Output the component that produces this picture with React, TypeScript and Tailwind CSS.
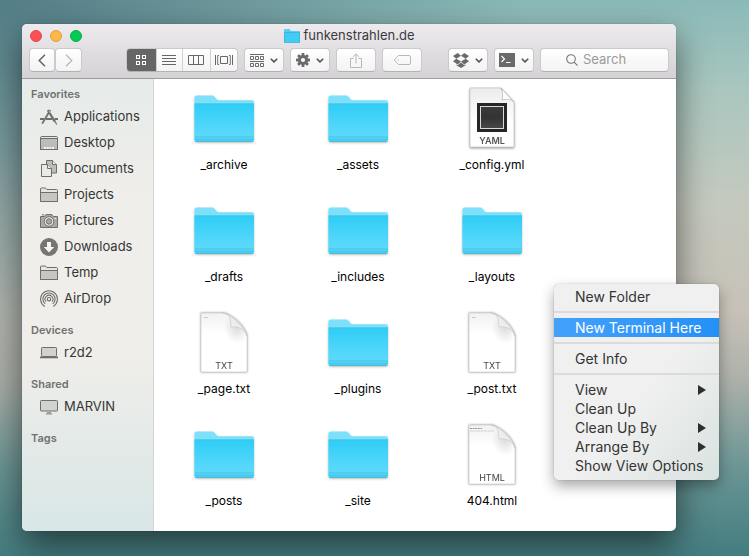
import React, { useState } from 'react';

type IconProps = { className?: string };

/* ---------- Toolbar icons ---------- */

const Chevron = () => (
  <svg viewBox="0 0 8 5" className="h-[5px] w-2 shrink-0" fill="none" stroke="#555" strokeWidth="1.6">
    <path d="M0.8 0.7 L4 3.9 L7.2 0.7" />
  </svg>
);

const BackIcon = () => (
  <svg viewBox="0 0 8 13" className="h-[13px] w-2" fill="none" stroke="#666" strokeWidth="1.5">
    <path d="M7 0.8 L1.2 6.5 L7 12.2" />
  </svg>
);

const ForwardIcon = () => (
  <svg viewBox="0 0 8 13" className="h-[13px] w-2" fill="none" stroke="#b9b9b9" strokeWidth="1.3">
    <path d="M1 0.8 L6.8 6.5 L1 12.2" />
  </svg>
);

const GridIcon = () => (
  <svg viewBox="0 0 10 10" className="size-[10px]" fill="none" stroke="#fff">
    <path d="M0.5 0.5h3v3h-3z M6.5 0.5h3v3h-3z M0.5 6.5h3v3h-3z M6.5 6.5h3v3h-3z" strokeWidth="1.1" />
  </svg>
);

const ListIcon = () => (
  <svg viewBox="0 0 14 10" className="h-[10px] w-[14px]" stroke="#666">
    <path d="M0 0.5h14 M0 3.5h14 M0 6.5h14 M0 9.5h14" />
  </svg>
);

const ColumnsIcon = () => (
  <svg viewBox="0 0 16 10" className="h-[10px] w-4" fill="none" stroke="#666">
    <path d="M0.5 0.5h15v9h-15z M5.5 0.5v9 M10.5 0.5v9" />
  </svg>
);

const FlowIcon = () => (
  <svg viewBox="0 0 18 10" className="h-[10px] w-[18px]" fill="none" stroke="#666">
    <path d="M5.5 1.5h7v7h-7z M0.5 0v10 M17.5 0v10" />
    <path d="M4 0.5h-1.3v9h1.3 M14 0.5h1.3v9h-1.3" strokeWidth="0.9" />
  </svg>
);

const ArrangeIcon = () => (
  <svg viewBox="0 0 14 13" className="h-[13px] w-[14px]" fill="none" stroke="#6a6a6a">
    <path d="M0 0.5h14 M0 7.5h14" />
    <path d="M0.5 2.5h3v3h-3z M5.5 2.5h3v3h-3z M10.5 2.5h3v3h-3z M0.5 9.5h3v3h-3z M5.5 9.5h3v3h-3z M10.5 9.5h3v3h-3z" />
  </svg>
);

const GearIcon = () => (
  <svg viewBox="-7 -7 14 14" className="size-[14px]" fill="#6a6a6a">
    {[0, 45, 90, 135].map((angle) => (
      <rect key={angle} x="-1.4" y="-7" width="2.8" height="14" rx="0.5" transform={`rotate(${angle})`} />
    ))}
    <circle r="5" />
    <circle r="2.1" fill="#f8f8f8" />
  </svg>
);

const ShareIcon = () => (
  <svg viewBox="0 0 12 15" className="h-[15px] w-3" fill="none" stroke="#b8b8b8">
    <path d="M3.5 5.5h-3v9h11v-9h-3 M6 10.5V1 M3 3.8L6 0.8L9 3.8" />
  </svg>
);

const TagIcon = () => (
  <svg viewBox="0 0 17 10" className="h-[10px] w-[17px]" fill="none" stroke="#b8b8b8">
    <path d="M4.5 0.5h10.5q1.5 0 1.5 1.5v6q0 1.5 -1.5 1.5h-10.5L1 6.2q-0.8 -1.2 0 -2.4z" />
    <circle cx="4.2" cy="5" r="0.7" fill="#b8b8b8" stroke="none" />
  </svg>
);

const DropboxIcon = () => (
  <svg viewBox="0 0 16 15" className="h-[15px] w-4" fill="#6a6a6a">
    <path d="M4.7 0L8 2.8L3.3 5.7L0 3z M11.3 0L16 3L12.7 5.7L8 2.8z M3.3 5.7L8 8.6L4.7 11.4L0 8.3z M12.7 5.7L16 8.3L11.3 11.4L8 8.6z M4.7 12.2L8 9.5L11.3 12.2L12.7 11.4V12.3L8 15L3.3 12.3V11.4z" />
  </svg>
);

const TerminalIcon = () => (
  <svg viewBox="0 0 16 14" className="h-[14px] w-4" fill="none">
    <rect width="16" height="14" fill="#6a6a6a" />
    <path d="M2.5 3L5.5 6L2.5 9 M7 9.5h4.5" stroke="#fff" strokeWidth="1.2" />
  </svg>
);

const SearchIcon = () => (
  <svg viewBox="0 0 12 12" className="size-3 shrink-0" fill="none" stroke="#777" strokeWidth="1.1">
    <circle cx="5" cy="5" r="4.3" />
    <path d="M8.1 8.1L11.6 11.6" />
  </svg>
);

/* ---------- Sidebar icons ---------- */

const ApplicationsIcon = ({ className }: IconProps) => (
  <svg viewBox="0 0 18 18" className={className} fill="none" stroke="#6e6e6b">
    <path d="M10.3 2L2.2 15.6" strokeWidth="1.8" />
    <path d="M7.8 2L14.8 13.6" strokeWidth="2.2" />
    <path d="M14.6 13L16.8 16.5" strokeWidth="1.2" />
    <path d="M0 11h4 M6 11h6 M14.5 11h3.5" strokeWidth="1.8" />
    <path d="M9 2.5L10.4 5" stroke="#e9ebe8" strokeWidth="0.6" />
  </svg>
);

const DesktopIcon = ({ className }: IconProps) => (
  <svg viewBox="0 0 18 18" className={className} fill="#bcbcb9" stroke="#6e6e6b">
    <path d="M0.5 15.5V4q0 -1.5 1.5 -1.5h14q1.5 0 1.5 1.5v11.5z" />
    <path d="M1 3.5h16" stroke="#e6e6e3" />
    <path d="M1 4.5h16" />
    <path d="M4 14h10" stroke="#f4f4f2" strokeWidth="2" strokeDasharray="2 0.7" />
    <path d="M0 15.5h18" />
  </svg>
);

const DocumentsIcon = ({ className }: IconProps) => (
  <svg viewBox="0 0 18 18" className={className} stroke="#6e6e6b">
    <path d="M6.5 0.5h6l4 4v8.5h-10z" fill="#bcbcb9" />
    <path d="M12.5 0.5v4h4" fill="#eee" />
    <path d="M1.5 4.5h6l4 4v8h-10z" fill="#e9eae6" />
    <path d="M7.5 4.5v4h4" fill="#e9eae6" />
  </svg>
);

const FolderOutlineIcon = ({ className }: IconProps) => (
  <svg viewBox="0 0 18 18" className={className} fill="#c6c6c3" stroke="#6e6e6b">
    <path d="M0.5 15.5V3q0 -1 1 -1h4l1.3 1.5h9.7q1 0 1 1v11z" fill="#e6e6e2" />
    <path d="M0.5 6.5h17v9h-17z" />
  </svg>
);

const PicturesIcon = ({ className }: IconProps) => (
  <svg viewBox="0 0 18 18" className={className} fill="#aaaaa7" stroke="#6e6e6b">
    <path d="M0.5 15.5v-11h4.2l1.3 -1.9h6l1.3 1.9h4.2v11z" />
    <path d="M2 2.9h2.5" />
    <circle cx="9" cy="9.5" r="4.8" fill="#e8e8e4" />
    <circle cx="9" cy="9.5" r="2.7" fill="#aaaaa7" />
    <path d="M14.5 6.5h1.6" stroke="#eee" />
  </svg>
);

const DownloadsIcon = ({ className }: IconProps) => (
  <svg viewBox="0 0 18 18" className={className}>
    <circle cx="9" cy="9" r="9" fill="#757571" />
    <path d="M7 4h4v5h3.2L9 14.5L3.8 9H7z" fill="#f5f4f0" />
  </svg>
);

const AirDropIcon = ({ className }: IconProps) => (
  <svg viewBox="0 0 18 18" className={className} fill="none" stroke="#6e6e6b" strokeWidth="1.1">
    <path d="M4.8 16.4A8.4 8.4 0 1 1 13.2 16.4" />
    <path d="M5.3 13.9A6.1 6.1 0 1 1 12.7 13.9" />
    <path d="M6 11.7A3.9 3.9 0 1 1 12 11.7" />
    <circle cx="9" cy="9.2" r="1.7" />
  </svg>
);

const LaptopIcon = ({ className }: IconProps) => (
  <svg viewBox="0 0 18 18" className={className} fill="#d2d2cf" stroke="#6e6e6b">
    <rect x="1.5" y="3.5" width="15" height="9" rx="0.8" />
    <path d="M0 13.4h18" strokeWidth="1.8" />
  </svg>
);

const DisplayIcon = ({ className }: IconProps) => (
  <svg viewBox="0 0 18 18" className={className} fill="#d2d2cf" stroke="#6e6e6b">
    <rect x="0.5" y="2.5" width="17" height="10.5" rx="0.8" />
    <path d="M7 14.5h4" stroke="#999" />
    <path d="M6 15.9h6" stroke="#777" />
  </svg>
);

/* ---------- File icons ---------- */

const FolderIcon = () => (
  <svg viewBox="0 0 64 64" className="size-16 drop-shadow-[0_1px_1px_rgba(0,0,0,0.25)]">
    <defs>
      <linearGradient id="folder-front" x1="0" y1="0" x2="0" y2="1">
        <stop offset="0" stopColor="#2fcdf6" />
        <stop offset="0.8" stopColor="#5ad9fa" />
        <stop offset="1" stopColor="#4fcdee" />
      </linearGradient>
    </defs>
    <path d="M2.5 53V10.500q0 -2 2 -2h15.500q1.500 0 2.500 1.200l2.300 2.700q0.800 0.800 2 0.800H60q2 0 2 2v37z" fill="#7ee1fc" />
    <path d="M2.500 16.500h59.500v36.500q0 2 -2 2h-55.500q-2 0 -2 -2z" fill="url(#folder-front)" />
    <path d="M3 17h58.500" stroke="#41c2e6" strokeWidth="0.8" />
    <path d="M3 50h58.500 M3 52.500h58.500" stroke="#42c3e6" strokeWidth="0.8" />
    <path d="M4 54.600h56.500" stroke="#3db1d3" strokeWidth="0.8" />
  </svg>
);

const PageIcon = ({ label }: { label: string }) => (
  <svg viewBox="0 0 64 64" className="size-16 drop-shadow-[0_0_1px_rgba(0,0,0,0.4)]">
    <defs>
      <linearGradient id="page-fold" x1="0.1" y1="0.9" x2="0.8" y2="0.2">
        <stop offset="0" stopColor="#ffffff" />
        <stop offset="1" stopColor="#e2e2e2" />
      </linearGradient>
      <linearGradient id="page-shade" x1="0" y1="0" x2="0" y2="1">
        <stop offset="0" stopColor="#f1f1f1" />
        <stop offset="0.35" stopColor="#ffffff" />
      </linearGradient>
      <radialGradient id="page-curl" cx="0.78" cy="0.24" r="0.28">
        <stop offset="0" stopColor="#dcdcdc" />
        <stop offset="1" stopColor="#dcdcdc" stopOpacity="0" />
      </radialGradient>
    </defs>
    <path d="M9 2H31C39 3 53 14 55 25V61H9z" fill="url(#page-shade)" />
    <path d="M9 2H31C39 3 53 14 55 25V61H9z" fill="url(#page-curl)" stroke="#c8c8c8" strokeWidth="0.6" />
    <path d="M31 2C38 3 39 8 39 16C46 15 53 18 55 25C53 17 40 3 31 2z" fill="url(#page-fold)" stroke="#c4c4c4" strokeWidth="0.6" />
    {label === 'HTML' ? (
      <>
        <path d="M10 5.500h12" stroke="#999" strokeDasharray="2 0.600" />
        <path d="M10 8h24" stroke="#cfd3e2" strokeDasharray="3 0.500" />
      </>
    ) : (
      <path d="M12 6.500h4" stroke="#bbb" strokeDasharray="1.500 0.500" />
    )}
    <text x="32" y="58" textAnchor="middle" className="font-['Inter','Liberation_Sans',sans-serif] text-[9px]" fill="#444">
      {label}
    </text>
  </svg>
);

const YamlIcon = () => (
  <svg viewBox="0 0 64 64" className="size-16 drop-shadow-[0_1px_1px_rgba(0,0,0,0.4)]">
    <defs>
      <linearGradient id="yaml-page" x1="0" y1="0" x2="0" y2="1">
        <stop offset="0" stopColor="#ececec" />
        <stop offset="0.6" stopColor="#ffffff" />
      </linearGradient>
      <linearGradient id="yaml-screen" x1="0" y1="0" x2="0" y2="1">
        <stop offset="0" stopColor="#3b3b3b" />
        <stop offset="0.500" stopColor="#333" />
        <stop offset="1" stopColor="#484848" />
      </linearGradient>
    </defs>
    <path d="M10 1H41L54 15V60H10z" fill="url(#yaml-page)" stroke="#c8c8c8" strokeWidth="0.8" />
    <path d="M41 1C43 5 43 10 42 13C47 12 51 12 54 15z" fill="#fff" stroke="#aaa" strokeWidth="0.7" />
    <rect x="17" y="16" width="30" height="29" fill="#262626" />
    <rect x="20.500" y="19.500" width="23" height="22" fill="url(#yaml-screen)" stroke="#d8d8d8" />
    <text x="32" y="57" textAnchor="middle" className="font-['Inter','Liberation_Sans',sans-serif] text-[9px] font-semibold" fill="#555">
      YAML
    </text>
  </svg>
);

/* ---------- Data ---------- */

const sections = [
  {
    title: 'Favorites',
    items: [
      { name: 'Applications', icon: ApplicationsIcon },
      { name: 'Desktop', icon: DesktopIcon },
      { name: 'Documents', icon: DocumentsIcon },
      { name: 'Projects', icon: FolderOutlineIcon },
      { name: 'Pictures', icon: PicturesIcon },
      { name: 'Downloads', icon: DownloadsIcon },
      { name: 'Temp', icon: FolderOutlineIcon },
      { name: 'AirDrop', icon: AirDropIcon },
    ],
  },
  { title: 'Devices', items: [{ name: 'r2d2', icon: LaptopIcon }] },
  { title: 'Shared', items: [{ name: 'MARVIN', icon: DisplayIcon }] },
  { title: 'Tags', items: [] },
];

const files = [
  { name: '_archive', kind: 'folder' },
  { name: '_assets', kind: 'folder' },
  { name: '_config.yml', kind: 'YAML' },
  { name: '_drafts', kind: 'folder' },
  { name: '_includes', kind: 'folder' },
  { name: '_layouts', kind: 'folder' },
  { name: '_page.txt', kind: 'TXT' },
  { name: '_plugins', kind: 'folder' },
  { name: '_post.txt', kind: 'TXT' },
  { name: '_posts', kind: 'folder' },
  { name: '_site', kind: 'folder' },
  { name: '404.html', kind: 'HTML' },
];

const menuGroups = [
  [{ label: 'New Folder' }],
  [{ label: 'New Terminal Here', active: true }],
  [{ label: 'Get Info' }],
  [
    { label: 'View', submenu: true },
    { label: 'Clean Up' },
    { label: 'Clean Up By', submenu: true },
    { label: 'Arrange By', submenu: true },
    { label: 'Show View Options' },
  ],
] as { label: string; active?: boolean; submenu?: boolean }[][];

/* ---------- Pieces ---------- */

const buttonBase =
  'flex h-6 items-center justify-center rounded-[4px] border border-[#cbc9cb] border-b-[#b3b1b3] bg-linear-to-b from-white to-[#f3f3f3]';

function ToolButton({ label, children }: { label: string; children: React.ReactNode }) {
  return (
    <button type="button" aria-label={label} className={`${buttonBase} w-10 gap-[6px]`}>
      {children}
    </button>
  );
}

function Toolbar() {
  const [query, setQuery] = useState('');

  return (
    <header className="border-b border-[#9f9da0] bg-linear-to-b from-[#edebee] to-[#d4d2d5] px-[7px] pb-[6px]">
      <div className="grid h-6 grid-cols-[1fr_auto_1fr] items-center">
        <div className="flex gap-2 pl-px">
          <button type="button" aria-label="Close" className="size-3 rounded-full border border-[#e2464c] bg-[#fd5056]" />
          <button type="button" aria-label="Minimize" className="size-3 rounded-full border border-[#e19d3c] bg-[#fdb846]" />
          <button type="button" aria-label="Zoom" className="size-3 rounded-full border border-[#09ac45] bg-[#03cc55]" />
        </div>
        <h1 className="flex items-center gap-1 text-[13px] text-[#3c3a3d]">
          <svg viewBox="0 0 16 14" className="h-[14px] w-4">
            <path d="M0 13V1q0 -1 1 -1h4.500l1.500 2H15q1 0 1 1v10z" fill="#5ccdf0" />
            <path d="M0.500 3.500h15v10h-15z" fill="#42cbf3" stroke="#36b3dc" strokeWidth="0.8" />
          </svg>
          funkenstrahlen.de
        </h1>
      </div>

      <div className="flex items-center">
        <div className="flex">
          <button type="button" aria-label="Back" className={`${buttonBase} w-[26px]`}><BackIcon /></button>
          <button type="button" aria-label="Forward" className={`${buttonBase} w-[27px]`}><ForwardIcon /></button>
        </div>

        <div className="ml-11 flex h-6 w-28 divide-x divide-[#d2d0d2] overflow-hidden rounded-[4px] border border-[#cbc9cb] border-b-[#b3b1b3] bg-linear-to-b from-white to-[#f3f3f3]">
          <button type="button" aria-label="Icon view" className="-m-px flex w-[31px] items-center justify-center bg-[#666]"><GridIcon /></button>
          <button type="button" aria-label="List view" className="flex flex-1 items-center justify-center"><ListIcon /></button>
          <button type="button" aria-label="Column view" className="flex flex-1 items-center justify-center"><ColumnsIcon /></button>
          <button type="button" aria-label="Cover flow view" className="flex flex-1 items-center justify-center"><FlowIcon /></button>
        </div>

        <div className="ml-[6px] flex gap-[6px]">
          <ToolButton label="Arrange"><ArrangeIcon /><Chevron /></ToolButton>
          <ToolButton label="Action"><GearIcon /><Chevron /></ToolButton>
          <ToolButton label="Share"><ShareIcon /></ToolButton>
          <ToolButton label="Edit tags"><TagIcon /></ToolButton>
        </div>

        <div className="ml-auto flex gap-[6px]">
          <ToolButton label="Dropbox"><DropboxIcon /><Chevron /></ToolButton>
          <ToolButton label="Open terminal"><TerminalIcon /><Chevron /></ToolButton>
          <label className={`${buttonBase} w-[129px] gap-[5px] pl-[25px]`}>
            <SearchIcon />
            <input
              type="text"
              aria-label="Search"
              placeholder="Search"
              value={query}
              onChange={(e) => setQuery(e.target.value)}
              className="w-full min-w-0 bg-transparent text-[13px] text-[#333] placeholder-[#9a9a9a] outline-none"
            />
          </label>
        </div>
      </div>
    </header>
  );
}

function Sidebar() {
  return (
    <nav className="flex w-[132px] shrink-0 flex-col gap-2 border-r border-[#d3d6d4] bg-[linear-gradient(to_bottom,#e6ebe9_0%,#f0eeea_28%,#f0eeea_60%,#e4eae8_80%,#d9e7e7_100%)] pt-[5px] pl-[9px]">
      {sections.map((section) => (
        <section key={section.title}>
          <h2 className="text-[11px] leading-5 font-semibold text-[#70716f]">{section.title}</h2>
          <ul className="pl-[9px]">
            {section.items.map(({ name, icon: Icon }) => (
              <li key={name}>
                <a href="#" className="flex h-[26px] items-center gap-[6px] text-[13px] text-[#363735]">
                  <Icon className="size-[18px] shrink-0" />
                  {name}
                </a>
              </li>
            ))}
          </ul>
        </section>
      ))}
    </nav>
  );
}

function FileIcon({ kind }: { kind: string }) {
  if (kind === 'folder') return <FolderIcon />;
  if (kind === 'YAML') return <YamlIcon />;
  return <PageIcon label={kind} />;
}

function ContextMenu() {
  return (
    <div
      role="menu"
      className="absolute top-[284px] left-[554px] w-[165px] rounded-[5px] bg-linear-to-br from-[#f0f0f0] from-55% to-[#d9e2e0] pt-[3px] pb-[5px] text-[14px] text-[#343434] shadow-[0_0_1px_rgba(0,0,0,0.5),0_6px_14px_rgba(0,0,0,0.35)]"
    >
      {menuGroups.map((group, i) => (
        <div key={group[0].label}>
          {i > 0 && <div role="separator" className="my-[5px] h-[2px] bg-[#dadbda]" />}
          {group.map((item) => (
            <button
              key={item.label}
              type="button"
              role="menuitem"
              className={`flex h-[19px] w-full items-center justify-between pr-[13px] pl-[21px] text-left whitespace-nowrap ${
                item.active ? 'bg-linear-to-r from-[#43a1fb] to-[#2490f6] text-white' : ''
              }`}
            >
              {item.label}
              {item.submenu && (
                <svg viewBox="0 0 8 10" className="h-[10px] w-2" fill="#2f2f2f">
                  <path d="M0 0L8 5L0 10z" />
                </svg>
              )}
            </button>
          ))}
        </div>
      ))}
    </div>
  );
}

export default function App() {
  return (
    <div className="relative flex min-h-screen overflow-hidden bg-[radial-gradient(ellipse_at_0%_0%,#547e87_0%,#547e8700_50%),linear-gradient(to_bottom,#8abab8_0%,#a9c6bf_16%,#c4c9be_36%,#c7c1b7_56%,#aeb1aa_68%,#6b9594_84%,#437d80_100%)] pt-6 pr-[73px] pb-[25px] pl-[22px] font-['Inter','Liberation_Sans',sans-serif]">
      <div className="flex min-w-0 flex-1 flex-col overflow-hidden rounded-[5px] bg-white shadow-[0_0_1px_rgba(0,0,0,0.5),0_14px_34px_rgba(0,0,0,0.55)]">
        <Toolbar />
        <div className="flex flex-1">
          <Sidebar />
          <main className="grid flex-1 grid-cols-[repeat(auto-fill,134px)] content-start gap-y-[26px] pt-2 pl-[3px]">
            {files.map((file) => (
              <figure key={file.name} className="flex flex-col items-center gap-[6px]">
                <FileIcon kind={file.kind} />
                <figcaption className="text-[12px] leading-4 text-black">{file.name}</figcaption>
              </figure>
            ))}
          </main>
        </div>
      </div>
      <ContextMenu />
    </div>
  );
}
